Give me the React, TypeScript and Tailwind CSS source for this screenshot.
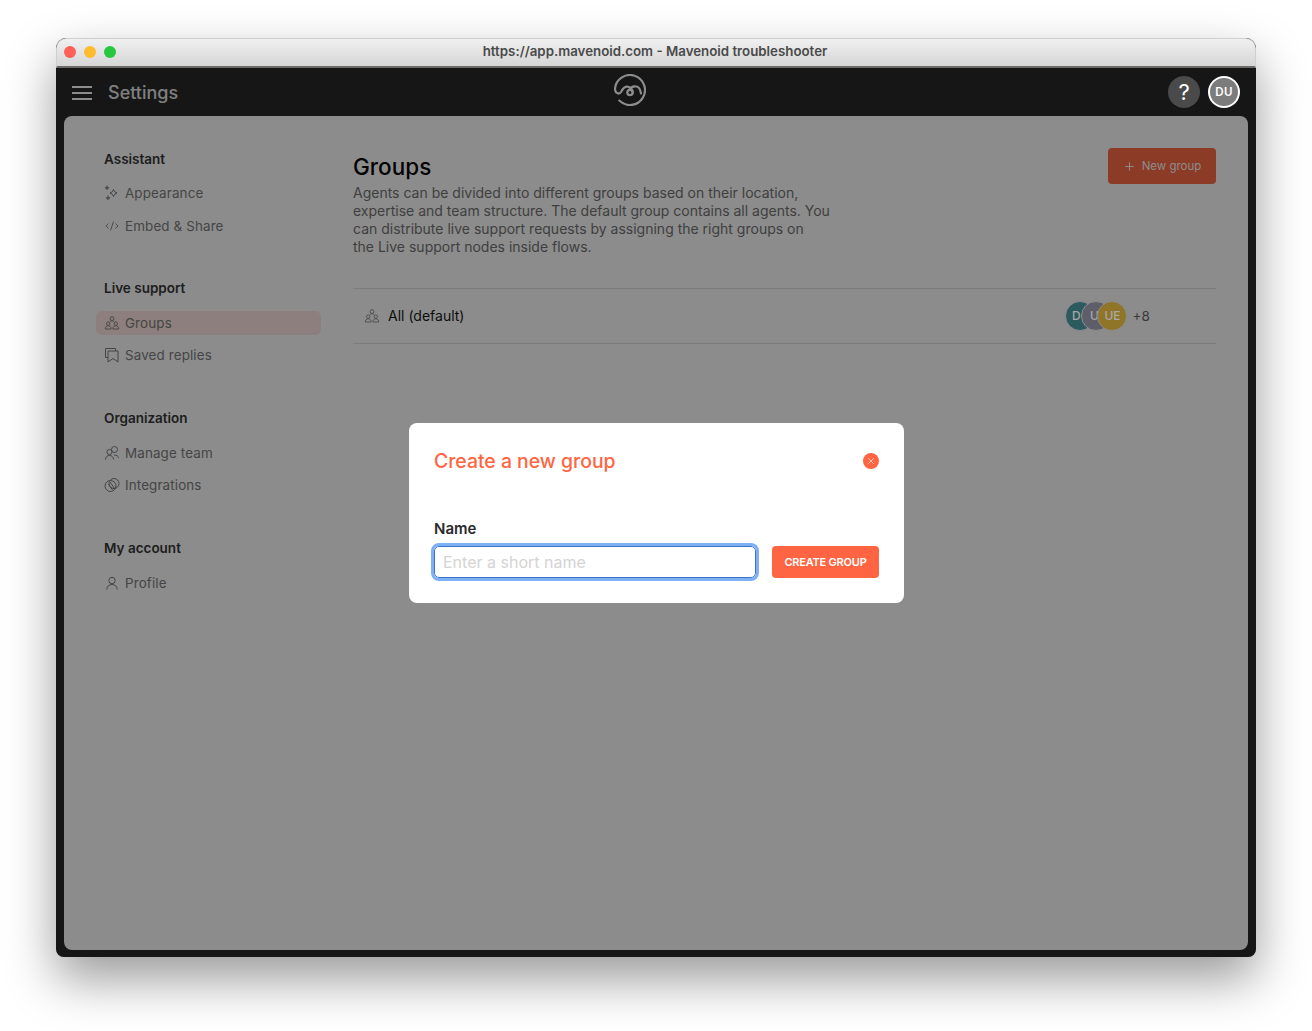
import { X, Plus } from "lucide-react";

const font = { fontFamily: "Inter, sans-serif" };

function SparkIcon() {
  return (
    <svg width="16" height="16" viewBox="0 0 16 16" fill="none" stroke="currentColor" strokeWidth="1">
      <path d="M9.500 4.500l1.200 2.300 2.300 1.200-2.300 1.200-1.200 2.300-1.200-2.300L6 8l2.300-1.200z" />
      <path d="M3 .5v4.500M.8 2.800h4.400M4 10.500v4.500M1.800 12.800h4.400" strokeWidth="1.200" />
    </svg>
  );
}

function CodeIcon() {
  return (
    <svg width="16" height="16" viewBox="0 0 16 16" fill="none" stroke="currentColor" strokeWidth="0.9">
      <path d="M4.500 5.500L2 8l2.500 2.500M11.500 5.500L14 8l-2.500 2.500M9.500 3.500L6.500 12.500" />
    </svg>
  );
}

function GroupIcon() {
  return (
    <svg width="16" height="16" viewBox="0 0 16 16" fill="none" stroke="currentColor" strokeWidth="0.9">
      <circle cx="8" cy="3.600" r="1.900" />
      <circle cx="4.200" cy="8.600" r="1.700" />
      <circle cx="11.800" cy="8.600" r="1.700" />
      <path d="M1.200 14c0-2 1.300-3.200 3-3.200s3 1.200 3 3.200zM8.800 14c0-2 1.300-3.200 3-3.200s3 1.200 3 3.200zM5.600 7c.5-.7 1.400-1.200 2.400-1.200s1.900.5 2.400 1.200" />
    </svg>
  );
}

function BookmarkIcon() {
  return (
    <svg width="16" height="16" viewBox="0 0 16 16" fill="none" stroke="currentColor" strokeWidth="1">
      <path d="M4 10.500H1.500V1.500h10v2.500M4 4h10v11l-5-3.500L4 15z" />
    </svg>
  );
}

function TeamIcon() {
  return (
    <svg width="16" height="16" viewBox="0 0 16 16" fill="none" stroke="currentColor" strokeWidth="1">
      <circle cx="10.500" cy="4.500" r="3" />
      <circle cx="5.500" cy="7" r="2.600" />
      <path d="M1.500 14.500c0-2.500 1.700-4 4-4s4 1.500 4 4M10 10c2.500 0 4.500 1 4.500 3" />
    </svg>
  );
}

function IntegrationIcon() {
  return (
    <svg width="16" height="16" viewBox="0 0 16 16" fill="none" stroke="currentColor" strokeWidth="1">
      <circle cx="6.500" cy="9" r="5.500" />
      <circle cx="10" cy="6.500" r="5" />
      <path d="M6 5l5 7M4.500 7l4 6" />
    </svg>
  );
}

function UserIcon() {
  return (
    <svg width="16" height="16" viewBox="0 0 16 16" fill="none" stroke="currentColor" strokeWidth="1">
      <circle cx="8" cy="5.500" r="3.200" />
      <path d="M2.800 14.500c0-3 2.200-5 5.200-5s5.200 2 5.200 5" />
    </svg>
  );
}

function Logo() {
  return (
    <svg width="32" height="32" viewBox="0 0 32 32" fill="none" stroke="#ffffff" strokeWidth="2.200" strokeLinecap="round">
      <path d="M5.300 26.600A15 15 0 1 0 1 15C1 19 5 21 7 18C9 14 12 12 15 13C18 14 19 17 18.500 19" />
      <path d="M15.500 15.500C17 12.500 20 12 22.500 12.500C25 13 26.500 16 27 19.500" />
      <circle cx="16" cy="18.500" r="2.700" />
    </svg>
  );
}

const nav = [
  { title: "Assistant", list: "mt-3 gap-[9px]", wrap: "-mb-px", items: [{ label: "Appearance", icon: <SparkIcon /> }, { label: "Embed & Share", icon: <CodeIcon /> }] },
  { title: "Live support", list: "mt-[13px] gap-2", wrap: "", items: [{ label: "Groups", icon: <GroupIcon />, active: true }, { label: "Saved replies", icon: <BookmarkIcon /> }] },
  { title: "Organization", list: "mt-[13px] gap-2", wrap: "", items: [{ label: "Manage team", icon: <TeamIcon /> }, { label: "Integrations", icon: <IntegrationIcon /> }] },
  { title: "My account", list: "mt-[13px] gap-2", wrap: "", items: [{ label: "Profile", icon: <UserIcon /> }] },
];

function Sidebar() {
  return (
    <aside className="flex w-[225px] shrink-0 flex-col gap-[41px] pt-px">
      {nav.map((section) => (
        <div key={section.title} className={`flex flex-col ${section.wrap}`}>
          <div className="h-5 pl-2 text-[13.500px] leading-5 font-semibold text-[#383838]">{section.title}</div>
          <div className={`flex flex-col ${section.list}`}>
            {section.items.map((item) => (
              <div
                key={item.label}
                className={`flex h-6 items-center gap-[5px] rounded-md pl-2 text-[13.400px] tracking-[0.01em] text-[#7e7e7e] ${item.active ? "bg-[#ffe8e3]" : ""}`}
              >
                <span className="flex h-4 w-4 items-center justify-center text-[#7e7e7e]">{item.icon}</span>
                {item.label}
              </div>
            ))}
          </div>
        </div>
      ))}
    </aside>
  );
}

// these sit above the dimming layer, so they carry their final colours
function Avatar({ text, color, shift }: { text: string; color: string; shift: string }) {
  return (
    <div className={`relative z-10 -mr-[14px] flex h-[30px] w-[30px] items-center justify-center rounded-full border border-[#8c8c8c] text-xs font-medium text-[#a8a8a8] ${color} ${shift}`}>
      {text}
    </div>
  );
}

function Main() {
  return (
    <main className="min-w-0 flex-1">
      <div className="flex items-start justify-between">
        <div className="w-[490px]">
          <h1 className="pt-[5px] text-[22.500px] leading-7 font-medium text-[#080808]">Groups</h1>
          <p className="mt-[3px] text-sm leading-[18px] text-[#747474]">
            Agents can be divided into different groups based on their location,
            <br />
            expertise and team structure. The default group contains all agents. You
            <br />
            can distribute live support requests by assigning the right groups on
            <br />
            the Live support nodes inside flows.
          </p>
        </div>
        <button className="relative z-10 flex h-9 w-[108px] items-center justify-center gap-[6px] rounded bg-[#8c3b27] pt-[2px] text-[11.500px] text-[#8c8c8c]">
          <Plus size={13} strokeWidth={1.800} className="-mt-[2px]" />
          New group
        </button>
      </div>
      <div className="mt-8 flex h-14 items-center border-y border-[#e2e2e2] pl-[11px]">
        <span className="flex h-4 w-4 items-center justify-center text-[#8a8a8a]"><GroupIcon /></span>
        <span className="ml-2 text-sm text-[#1a1a1a]">All (default)</span>
        <div className="ml-[601px] flex items-center">
          <Avatar text="D" color="bg-[#2c5a5f]" shift="pr-2" />
          <Avatar text="U" color="bg-[#5d5e68]" shift="pr-1" />
          <Avatar text="UE" color="bg-[#8f7528]" shift="" />
          <span className="ml-[19px] text-[13.500px] text-[#6a6a6a]">+8</span>
        </div>
      </div>
    </main>
  );
}

function Modal() {
  return (
    <div className="absolute top-[385px] left-[353px] h-[180px] w-[495px] rounded-lg bg-white px-[25px] pt-[26px]">
      <div className="flex items-center justify-between">
        <h2 className="text-[19.400px] leading-6 font-medium text-[#ff6542]">Create a new group</h2>
        <span className="flex h-4 w-4 items-center justify-center rounded-full bg-[#ff6542] text-white">
          <X size={10} strokeWidth={1.500} />
        </span>
      </div>
      <label className="mt-[46px] block text-[15px] leading-5 font-semibold text-[#2b2b2b]">Name</label>
      <div className="mt-[7px] flex items-center gap-4">
        <input
          placeholder="Enter a short name"
          className="h-8 w-[322px] rounded-[5px] border border-[#3f74c4] bg-white px-2 text-base outline-[3px] outline-[#7db0f7] placeholder:text-[#d4d4d4]"
        />
        <button className="h-8 w-[107px] rounded bg-[#ff6542] text-[11px] font-semibold tracking-[-0.02em] text-white">CREATE GROUP</button>
      </div>
    </div>
  );
}

export default function App() {
  return (
    <div className="h-[1031px] w-[1312px] bg-white pt-[38px] pl-[56px]" style={font}>
      <div className="relative flex h-[919px] w-[1200px] flex-col overflow-hidden rounded-t-[10px] rounded-b-lg bg-[#282828] shadow-[0_22px_50px_rgba(0,0,0,0.4)]">
        <div className="flex h-[30px] shrink-0 items-center rounded-t-[10px] border-x border-t border-b-2 border-x-[#cfcfcf] border-t-[#cfcfcf] border-b-[#6e6a68] bg-gradient-to-b from-[#f0f0f0] to-[#d6d6d6] pb-[2px]">
          <div className="flex gap-2 pl-[7px]">
            <span className="h-3 w-3 rounded-full bg-[#fe5f57]" />
            <span className="h-3 w-3 rounded-full bg-[#febc2e]" />
            <span className="h-3 w-3 rounded-full bg-[#27c840]" />
          </div>
          <div className="flex-1 pr-[61px] text-center text-[13.300px] font-semibold text-[#4a4a4a]">
            https://app.mavenoid.com - Mavenoid troubleshooter
          </div>
        </div>
        <div className="relative flex flex-1 flex-col">
          <header className="relative flex h-[48px] shrink-0 items-center pr-4 pl-4 text-white">
            <svg width="20" height="14" viewBox="0 0 20 14" fill="none" stroke="#ffffff" strokeWidth="2" className="mt-[2px]">
              <path d="M0 1h20M0 7h20M0 13h20" />
            </svg>
            <span className="mt-px ml-4 text-lg font-medium text-[#e8e8e8]">Settings</span>
            <div className="absolute top-[6px] left-[558px]"><Logo /></div>
            <div className="relative z-10 ml-auto flex items-center gap-2">
              <span className="flex h-8 w-8 items-center justify-center rounded-full bg-[#4a4a4a] text-[22px] leading-none text-white">?</span>
              <span className="flex h-8 w-8 items-center justify-center rounded-full border-2 border-white bg-[#7c7c7c] pt-[2px] text-[11.500px] font-semibold tracking-wide text-white">DU</span>
            </div>
          </header>
          <div className="mx-2 mb-[7px] flex flex-1 gap-8 rounded-lg bg-white p-8">
            <Sidebar />
            <Main />
          </div>
        </div>
        <div className="absolute inset-x-0 top-[30px] bottom-0 bg-black/45" />
        <Modal />
      </div>
    </div>
  );
}
